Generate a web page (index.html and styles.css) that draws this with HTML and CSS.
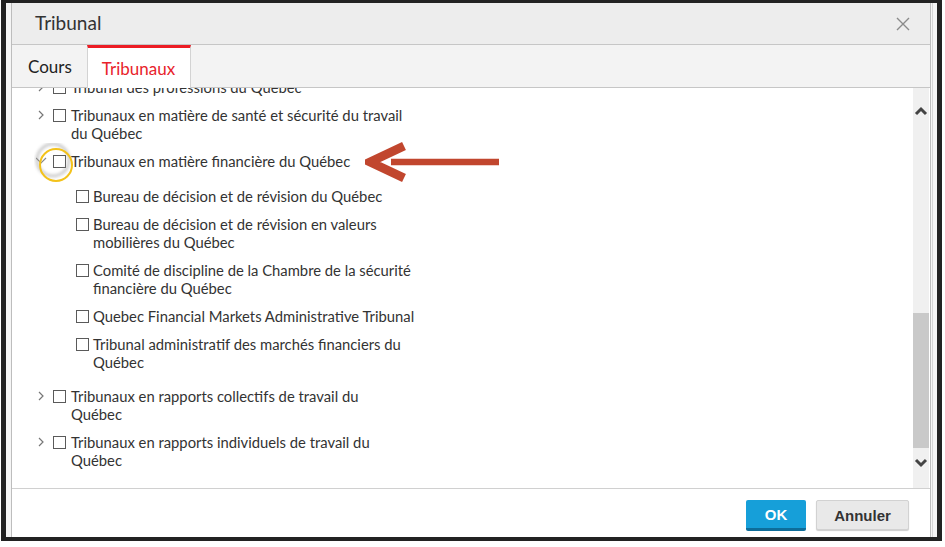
FILE: index.html
```html
<!DOCTYPE HTML>
<html>
    <head>
        <meta name="viewport" content="width=device-width, initial-scale=1.0">
        <title>Tribunal</title>
        <link rel="stylesheet" href="styles.css">
    </head>
    <body>
        <div class="frame">
            <div class="page">
                <div class="dialog">
                    <div class="dlg-head">
                        <span class="dlg-title">Tribunal</span>
                        <button class="close" aria-label="Fermer">
                            <svg width="14" height="14" viewBox="0 0 14 14"><path d="M1 1L13 13M13 1L1 13" stroke="#8a8a8a" stroke-width="1.4" fill="none"/></svg>
                        </button>
                    </div>
                    <div class="tabs">
                        <div class="tab">Cours</div>
                        <div class="tab active">Tribunaux</div>
                    </div>
                    <div class="dlg-body">
                        <div class="tree-wrap">
                            <ul class="tree">
                                <li>
                                    <div class="node">
                                        <span class="toggle"><svg width="17" height="18" viewBox="0 0 17 18"><path d="M3 5L7 9L3 13" stroke="#777" stroke-width="1.2" fill="none"/></svg></span>
                                        <span class="box"></span>
                                        <span class="label">Tribunal des professions du Québec</span>
                                    </div>
                                </li>
                                <li>
                                    <div class="node">
                                        <span class="toggle"><svg width="17" height="18" viewBox="0 0 17 18"><path d="M3 5L7 9L3 13" stroke="#777" stroke-width="1.2" fill="none"/></svg></span>
                                        <span class="box"></span>
                                        <span class="label">Tribunaux en matière de santé et sécurité du travail du Québec</span>
                                    </div>
                                </li>
                                <li>
                                    <div class="node">
                                        <span class="toggle"><svg width="17" height="18" viewBox="0 0 17 18"><path d="M0 6L5 11L10 6" stroke="#888" stroke-width="1.2" fill="none"/></svg></span>
                                        <span class="box"></span>
                                        <span class="label">Tribunaux en matière financière du Québec</span>
                                    </div>
                                    <ul class="tree sub">
                                        <li><div class="node"><span class="box"></span><span class="label">Bureau de décision et de révision du Québec</span></div></li>
                                        <li><div class="node"><span class="box"></span><span class="label">Bureau de décision et de révision en valeurs mobilières du Québec</span></div></li>
                                        <li><div class="node"><span class="box"></span><span class="label">Comité de discipline de la Chambre de la sécurité financière du Québec</span></div></li>
                                        <li><div class="node"><span class="box"></span><span class="label">Quebec Financial Markets Administrative Tribunal</span></div></li>
                                        <li><div class="node"><span class="box"></span><span class="label">Tribunal administratif des marchés financiers du Québec</span></div></li>
                                    </ul>
                                </li>
                                <li>
                                    <div class="node">
                                        <span class="toggle"><svg width="17" height="18" viewBox="0 0 17 18"><path d="M3 5L7 9L3 13" stroke="#777" stroke-width="1.2" fill="none"/></svg></span>
                                        <span class="box"></span>
                                        <span class="label">Tribunaux en rapports collectifs de travail du Québec</span>
                                    </div>
                                </li>
                                <li>
                                    <div class="node">
                                        <span class="toggle"><svg width="17" height="18" viewBox="0 0 17 18"><path d="M3 5L7 9L3 13" stroke="#777" stroke-width="1.2" fill="none"/></svg></span>
                                        <span class="box"></span>
                                        <span class="label">Tribunaux en rapports individuels de travail du Québec</span>
                                    </div>
                                </li>
                            </ul>
                            <!-- annotations drawn over the screenshot -->
                            <svg class="ring" width="44" height="44" viewBox="0 0 44 44">
                                <defs><filter id="soft"><feGaussianBlur stdDeviation="1.5"/></filter></defs>
                                <circle cx="19" cy="17" r="16" stroke="#8d8d8d" stroke-width="3" fill="none" opacity="0.45" filter="url(#soft)"/>
                                <circle cx="22" cy="22" r="16" stroke="#f3c21b" stroke-width="2" fill="none"/>
                            </svg>
                            <svg class="arrow" width="136" height="42" viewBox="0 0 136 42">
                                <path d="M26 21H134" stroke="#c1462e" stroke-width="6.5"/>
                                <path d="M39 5L5 21L39 37" stroke="#c1462e" stroke-width="9" fill="none" stroke-linejoin="miter"/>
                            </svg>
                        </div>
                        <div class="scrollbar">
                            <svg width="16" height="16" viewBox="0 0 16 16" class="sb-up"><path d="M3 11L8 6L13 11" stroke="#444" stroke-width="3" fill="none"/></svg>
                            <div class="sb-thumb"></div>
                            <svg width="16" height="16" viewBox="0 0 16 16" class="sb-down"><path d="M3 5L8 10L13 5" stroke="#444" stroke-width="3" fill="none"/></svg>
                        </div>
                    </div>
                    <div class="dlg-foot">
                        <button class="btn btn-ok">OK</button>
                        <button class="btn btn-cancel">Annuler</button>
                    </div>
                </div>
                <div class="page-edge"></div>
            </div>
        </div>
    </body>
</html>
```

FILE: styles.css
```css
body{
    margin: 0;
    background: #fff;
    font-family: Lato, "Open Sans", sans-serif;
    color: #333;
}
.frame{
    margin-left: 1px;
    width: 931px;
    height: 534px;
    border-style: solid;
    border-color: #222;
    border-width: 3px 5px 4px 5px;
    overflow: hidden;
}
.page{
    display: flex;
    height: 100%;
    background: #f5f5f5;
    padding-left: 5px;
}
.dialog{
    width: 918px;
    height: 560px;
    flex: none;
    background: #fff;
    border-left: 1px solid #bdbdbd;
    border-right: 1px solid #bdbdbd;
    display: flex;
    flex-direction: column;
}
.page-edge{
    width: 1px;
    margin-left: 1px;
    background: #d6d6d6;
}
.dlg-head{
    height: 41px;
    flex: none;
    display: flex;
    align-items: center;
    justify-content: space-between;
    padding: 0 20px 0 23px;
    background: #ededed;
    border-bottom: 1px solid #c6c6c6;
}
.dlg-title{
    font-size: 19px;
    color: #333;
    margin-bottom: 2px;
}
.close{
    border: none;
    background: none;
    padding: 0;
    width: 14px;
    height: 14px;
    display: flex;
}
.tabs{
    height: 42px;
    flex: none;
    display: flex;
    background: #f3f3f3;
    border-bottom: 1px solid #c6c6c6;
}
.tab{
    font-size: 17px;
    padding: 0 15px 0 16px;
    display: flex;
    align-items: center;
    padding-top: 1px;
    color: #222;
}
.tab.active{
    color: #e8232b;
    background: #fff;
    border-left: 1px solid #d3d3d3;
    border-right: 1px solid #d3d3d3;
    border-top: 3px solid #ec1c24;
    padding-top: 0;
    margin-bottom: -1px;
    padding-left: 14px;
}
.dlg-body{
    height: 400px;
    flex: none;
    display: flex;
    border-bottom: 1px solid #d0d0d0;
}
.tree-wrap{
    flex: 1;
    position: relative;
    overflow: hidden;
}
.tree{
    list-style: none;
    margin: -10px 0 0;
    padding: 0 0 0 24px;
    display: flex;
    flex-direction: column;
    gap: 10px;
}
.tree.sub{
    margin: 17px 0 6px;
    padding-left: 40px;
}
.node{
    display: flex;
    align-items: flex-start;
    font-size: 14.8px;
    line-height: 18px;
}
.toggle{
    width: 17px;
    height: 18px;
    flex: none;
    display: flex;
}
.box{
    width: 11px;
    height: 11px;
    flex: none;
    margin-top: 3px;
    border: 1px solid #5a5a5a;
    background: #fff;
}
.label{
    margin-left: 5px;
    max-width: 332px;
    color: #333;
}
.sub .label{
    margin-left: 4px;
}
.ring{
    position: absolute;
    left: 22px;
    top: 55px;
}
.arrow{
    position: absolute;
    left: 353px;
    top: 53px;
}
.scrollbar{
    width: 16px;
    flex: none;
    margin-right: 1px;
    background: #f0f0f0;
    display: flex;
    flex-direction: column;
    align-items: center;
}
.sb-up{
    margin-top: 15px;
}
.sb-thumb{
    width: 16px;
    height: 135px;
    margin-top: 194px;
    background: #c9c9c9;
}
.sb-down{
    margin-top: 7px;
}
.dlg-foot{
    flex: 1;
    display: flex;
    justify-content: flex-end;
    align-items: flex-start;
    gap: 10px;
    padding: 11px 21px 0 0;
}
.btn{
    font-family: "Liberation Sans", Arial, sans-serif;
    font-weight: bold;
    font-size: 15px;
    cursor: pointer;
    border-radius: 2px;
}
.btn-ok{
    width: 60px;
    height: 31px;
    background: #169fd9;
    color: #fff;
    border: none;
    border-bottom: 3px solid #0d6d9a;
    padding-top: 2px;
}
.btn-cancel{
    width: 93px;
    height: 30px;
    background: #e9e9e9;
    color: #333;
    border: 1px solid #d2d2d2;
    box-shadow: 0 1px 1px rgba(0,0,0,0.2);
}
```
